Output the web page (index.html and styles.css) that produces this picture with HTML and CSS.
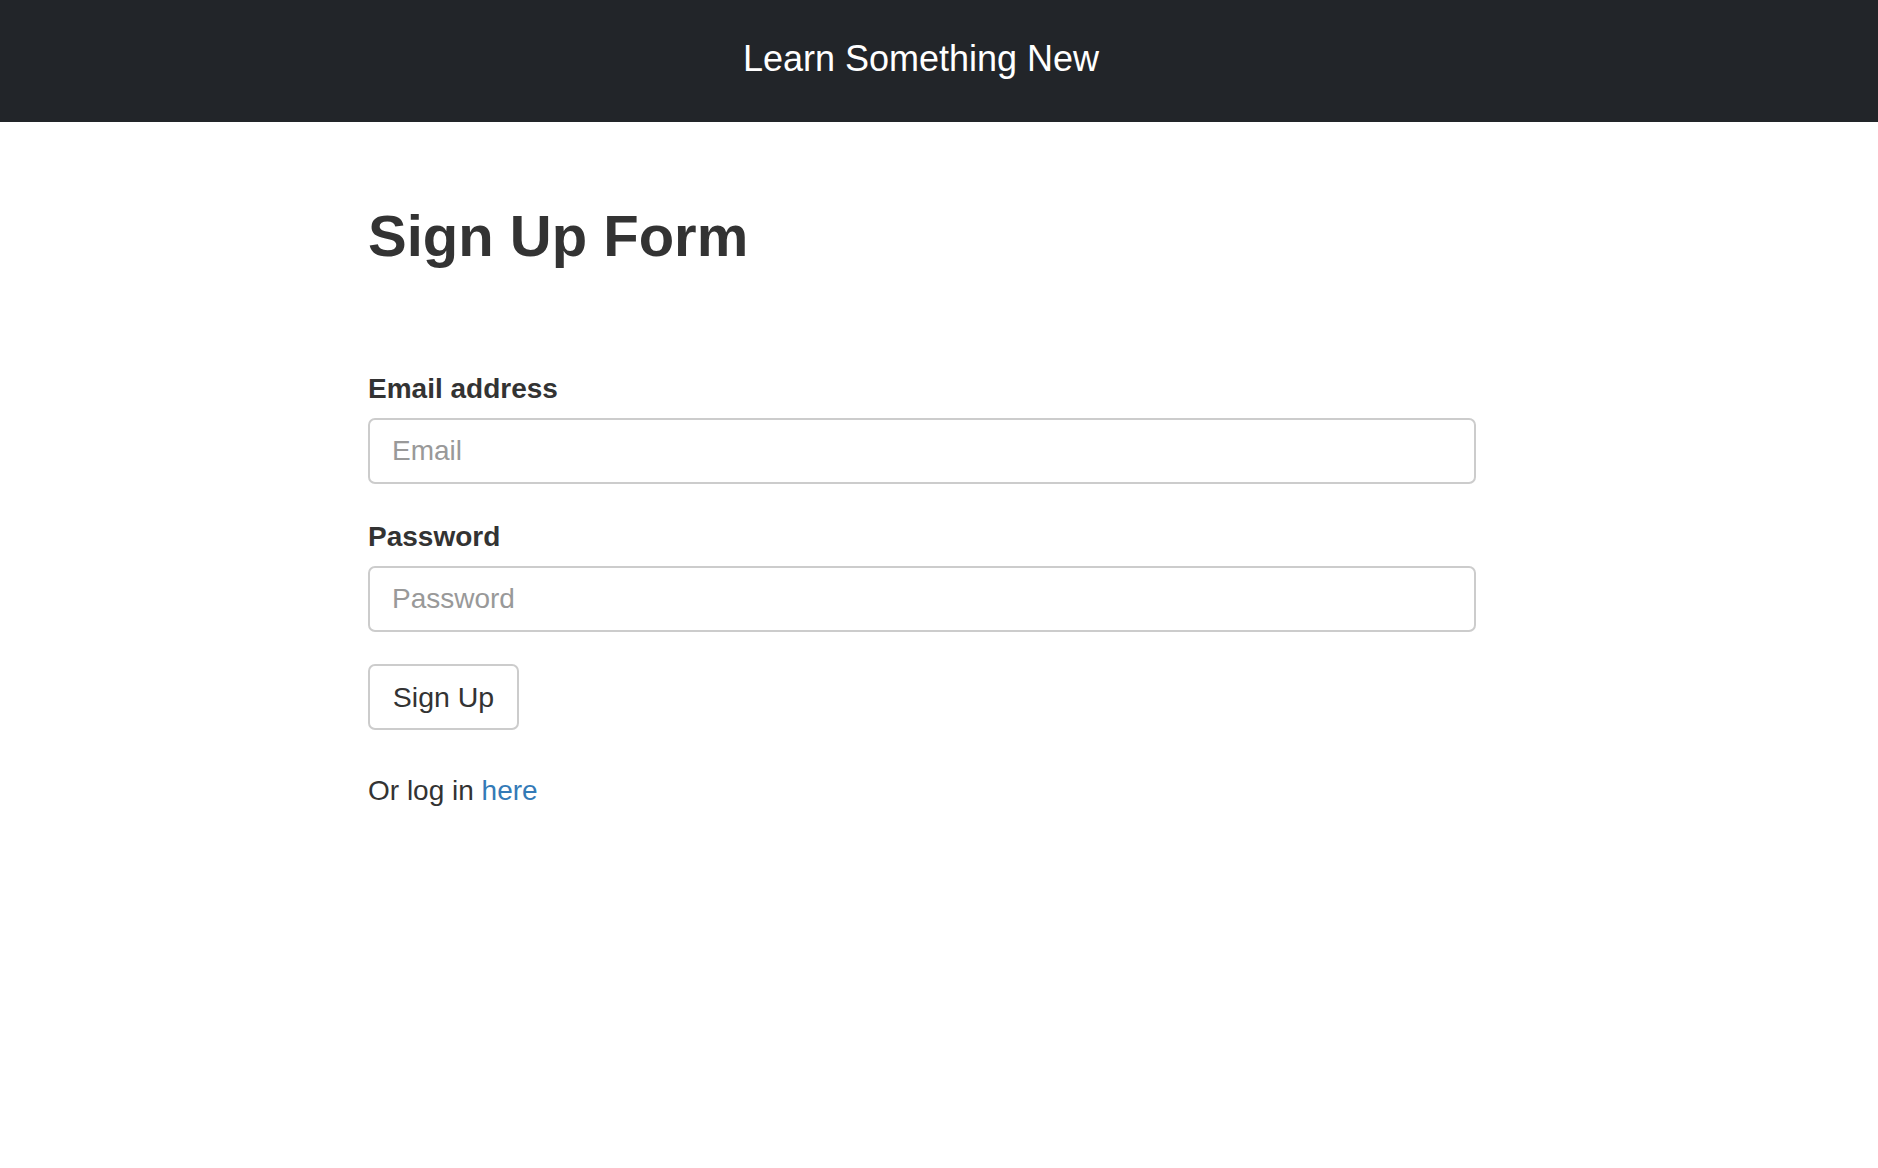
FILE: index.html
```html
<!DOCTYPE html>
<html lang="en">
<head>
<meta charset="utf-8">
<title>Sign Up</title>
<link rel="stylesheet" href="styles.css">
</head>
<body>
<header class="topbar">Learn Something New</header>
<main class="container">
  <h1 class="title">Sign Up Form</h1>
  <form class="form">
    <div class="group">
      <label class="label" for="email">Email address</label>
      <input class="field" type="email" id="email" placeholder="Email">
    </div>
    <div class="group">
      <label class="label" for="password">Password</label>
      <input class="field" type="password" id="password" placeholder="Password">
    </div>
    <button class="btn" type="button">Sign Up</button>
  </form>
  <p class="alt">Or log in <a class="link" href="#">here</a></p>
</main>
</body>
</html>
```

FILE: styles.css
```css
* { box-sizing: border-box; }
body {
  margin: 0;
  font-family: "Liberation Sans", Helvetica, Arial, sans-serif;
  color: #333333;
  background: #ffffff;
}
.topbar {
  height: 122px;
  background: #222529;
  color: #ffffff;
  font-size: 36px;
  display: flex;
  align-items: center;
  justify-content: center;
  padding-bottom: 4px;
  padding-right: 36px;
}
.container {
  width: 1142px;
  margin: 0 auto;
}
.title {
  font-size: 58px;
  font-weight: bold;
  line-height: 1.1;
  margin: 82px 0 0;
}
.form {
  width: 1108px;
  margin-top: 104px;
}
.group {
  display: flex;
  flex-direction: column;
  margin-bottom: 36px;
}
.group:last-of-type { margin-bottom: 32px; }
.label {
  font-size: 28px;
  font-weight: bold;
  line-height: 1.2;
  margin-bottom: 13px;
}
.group:last-of-type .label { margin-bottom: 12px; }
.field {
  height: 66px;
  width: 100%;
  border: 2px solid #cccccc;
  border-radius: 7px;
  padding: 0 22px;
  font-family: inherit;
  font-size: 28px;
  color: #555555;
  background: #ffffff;
  outline: none;
}
.field::placeholder { color: #999999; }
.btn {
  width: 151px;
  height: 66px;
  border: 2px solid #cccccc;
  border-radius: 7px;
  background: #ffffff;
  color: #333333;
  font-family: inherit;
  font-size: 28.5px;
  line-height: 1.2;
  padding: 0;
  display: block;
}
.alt {
  font-size: 28px;
  line-height: 1.2;
  margin: 44px 0 0;
}
.link {
  color: #337ab7;
  text-decoration: none;
}
```
